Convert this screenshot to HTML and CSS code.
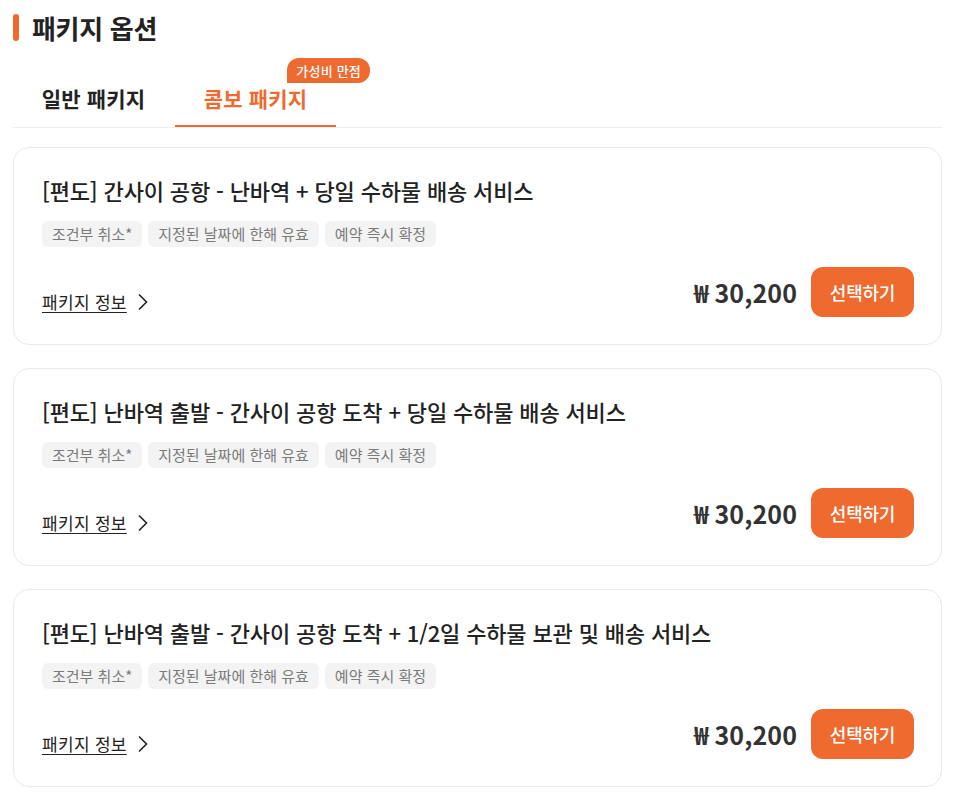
FILE: index.html
```html
<!DOCTYPE html>
<html lang="ko">
<head>
  <meta charset="UTF-8" />
  <meta name="viewport" content="width=device-width, initial-scale=1.0"/>
  <title>패키지 옵션</title>
  <link rel="stylesheet" href="styles.css">
</head>
<body>

  <div class="page">
    <h2 class="section-title">패키지 옵션</h2>

    <div class="tabs">
      <div class="tab">일반 패키지</div>
      <div class="tab active">
        콤보 패키지
        <span class="badge">가성비 만점</span>
      </div>
    </div>

    <div class="package-list">
      <div class="card">
        <h3 class="card-title">[편도] 간사이 공항 - 난바역 + 당일 수하물 배송 서비스</h3>
        <div class="tags">
          <span class="tag">조건부 취소*</span>
          <span class="tag">지정된 날짜에 한해 유효</span>
          <span class="tag">예약 즉시 확정</span>
        </div>
        <div class="card-bottom">
          <a href="#" class="info-link">패키지 정보
            <svg width="12" height="18" viewBox="0 0 12 18"><polyline points="2,1.5 9.5,9 2,16.5" fill="none" stroke="#222" stroke-width="1.6"/></svg>
          </a>
          <div class="buy">
            <span class="price">₩ 30,200</span>
            <button class="select-button">선택하기</button>
          </div>
        </div>
      </div>

      <div class="card">
        <h3 class="card-title">[편도] 난바역 출발 - 간사이 공항 도착 + 당일 수하물 배송 서비스</h3>
        <div class="tags">
          <span class="tag">조건부 취소*</span>
          <span class="tag">지정된 날짜에 한해 유효</span>
          <span class="tag">예약 즉시 확정</span>
        </div>
        <div class="card-bottom">
          <a href="#" class="info-link">패키지 정보
            <svg width="12" height="18" viewBox="0 0 12 18"><polyline points="2,1.5 9.5,9 2,16.5" fill="none" stroke="#222" stroke-width="1.6"/></svg>
          </a>
          <div class="buy">
            <span class="price">₩ 30,200</span>
            <button class="select-button">선택하기</button>
          </div>
        </div>
      </div>

      <div class="card">
        <h3 class="card-title">[편도] 난바역 출발 - 간사이 공항 도착 + 1/2일 수하물 보관 및 배송 서비스</h3>
        <div class="tags">
          <span class="tag">조건부 취소*</span>
          <span class="tag">지정된 날짜에 한해 유효</span>
          <span class="tag">예약 즉시 확정</span>
        </div>
        <div class="card-bottom">
          <a href="#" class="info-link">패키지 정보
            <svg width="12" height="18" viewBox="0 0 12 18"><polyline points="2,1.5 9.5,9 2,16.5" fill="none" stroke="#222" stroke-width="1.6"/></svg>
          </a>
          <div class="buy">
            <span class="price">₩ 30,200</span>
            <button class="select-button">선택하기</button>
          </div>
        </div>
      </div>
    </div>
  </div>

</body>
</html>
```

FILE: styles.css
```css
body {
  margin: 0;
  padding: 0;
  font-family: 'Noto Sans CJK KR', 'Noto Sans', sans-serif;
  background: #fff;
  color: #222;
}

.page {
  width: 929px;
  margin-left: 13px;
}

.section-title {
  display: flex;
  align-items: center;
  gap: 13px;
  margin: 0;
  padding-top: 10px;
  height: 34px;
  font-size: 26px;
  font-weight: 700;
  letter-spacing: -0.3px;
}

.section-title::before {
  content: "";
  width: 6px;
  height: 27px;
  border-radius: 3px;
  background-color: #ee6a2e;
}

.tabs {
  display: flex;
  margin-top: 26px;
  border-bottom: 1px solid #eeeeee;
}

.tab {
  position: relative;
  width: 161px;
  height: 57px;
  box-sizing: border-box;
  padding-top: 13px;
  text-align: center;
  font-size: 21px;
  font-weight: 600;
  letter-spacing: 0.2px;
  color: #222;
}

.tab.active {
  color: #ee6a2e;
  border-bottom: 2px solid #ee6a2e;
  margin-left: 1px;
}

.badge {
  position: absolute;
  top: -12px;
  right: -34px;
  padding: 0 9px;
  height: 25px;
  line-height: 25px;
  font-size: 13px;
  font-weight: 500;
  letter-spacing: 0.2px;
  color: #fff;
  background-color: #ee6a2e;
  border-radius: 12px 12px 12px 0;
}

.package-list {
  display: flex;
  flex-direction: column;
  gap: 23px;
  margin-top: 19px;
}

.card {
  border: 1px solid #e9e9e9;
  border-radius: 16px;
  padding: 27px 27px 27px 28px;
}

.card-title {
  margin: 0;
  font-size: 22px;
  font-weight: 500;
  line-height: 30px;
  letter-spacing: -0.15px;
  color: #222;
}

.tags {
  display: flex;
  gap: 6px;
  margin-top: 16px;
}

.tag {
  height: 26px;
  line-height: 26px;
  padding: 0 10px;
  font-size: 15px;
  letter-spacing: 0;
  color: #7a7a7a;
  background-color: #f3f3f3;
  border-radius: 6px;
}

.card-bottom {
  display: flex;
  justify-content: space-between;
  align-items: flex-end;
  margin-top: 20px;
}

.info-link {
  display: flex;
  align-items: center;
  gap: 10px;
  margin-bottom: 3px;
  font-size: 17px;
  letter-spacing: 0.3px;
  color: #222;
  text-decoration: underline;
  text-underline-offset: 3px;
}

.buy {
  display: flex;
  align-items: center;
  gap: 14px;
}

.price {
  font-size: 25px;
  font-weight: 600;
  letter-spacing: 0.1px;
  color: #333;
}

.select-button {
  width: 103px;
  height: 50px;
  font-family: inherit;
  font-size: 18px;
  font-weight: 500;
  letter-spacing: -0.2px;
  color: #fff;
  background-color: #ee6a2e;
  border: none;
  border-radius: 12px;
  cursor: pointer;
}
```
